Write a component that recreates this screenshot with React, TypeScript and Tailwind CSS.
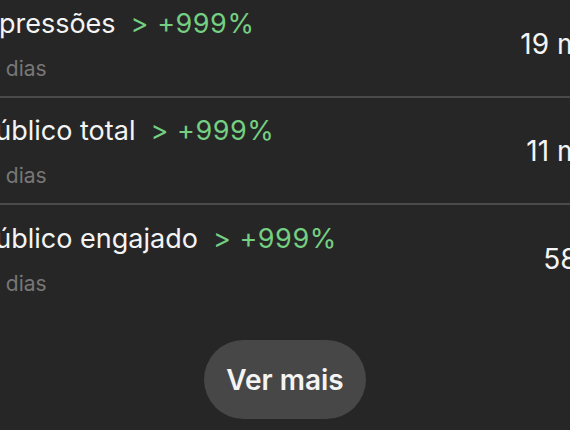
const metrics = [
  { label: 'Impressões', change: '+999%', period: '7 dias', value: '19 mil', shift: '-ml-[10px]' },
  { label: 'Público total', change: '+999%', period: '7 dias', value: '11 mil', shift: '' },
  { label: 'Público engajado', change: '+999%', period: '7 dias', value: '589', shift: '' },
];

export default function App() {
  return (
    <div
      className="w-[570px] h-[430px] overflow-hidden bg-[#262626] text-[#f4f4f4]"
      style={{ fontFamily: 'Inter, "Noto Sans", sans-serif' }}
    >
      <div className="-mt-[9px] -ml-[22px] w-[617px]">
        {metrics.map((m, i) => (
          <div
            key={m.label}
            className={`flex h-[107px] items-center justify-between ${
              i < metrics.length - 1 ? 'border-b-2 border-[#4a4a4a]' : ''
            }`}
          >
            <div className="flex flex-col pt-[2px]">
              <div className={`flex items-baseline whitespace-nowrap text-[27px] leading-[30px] ${m.shift}`}>
                <span>{m.label}</span>
                <span className="ml-[15px] tracking-[0.02em] text-[#74cf82]">&gt; {m.change}</span>
              </div>
              <div className="mt-[18px] ml-[10px] whitespace-nowrap text-[21px] leading-[24px] text-[#777777]">
                {m.period}
              </div>
            </div>
            <div className="whitespace-nowrap text-[28px] leading-[32px]">{m.value}</div>
          </div>
        ))}
      </div>
      <div className="mt-[28px] flex justify-center">
        <button className="flex h-[79px] w-[162px] items-center justify-center rounded-full bg-[#474747] text-[28px] font-semibold text-[#f4f4f4]">
          Ver mais
        </button>
      </div>
    </div>
  );
}
